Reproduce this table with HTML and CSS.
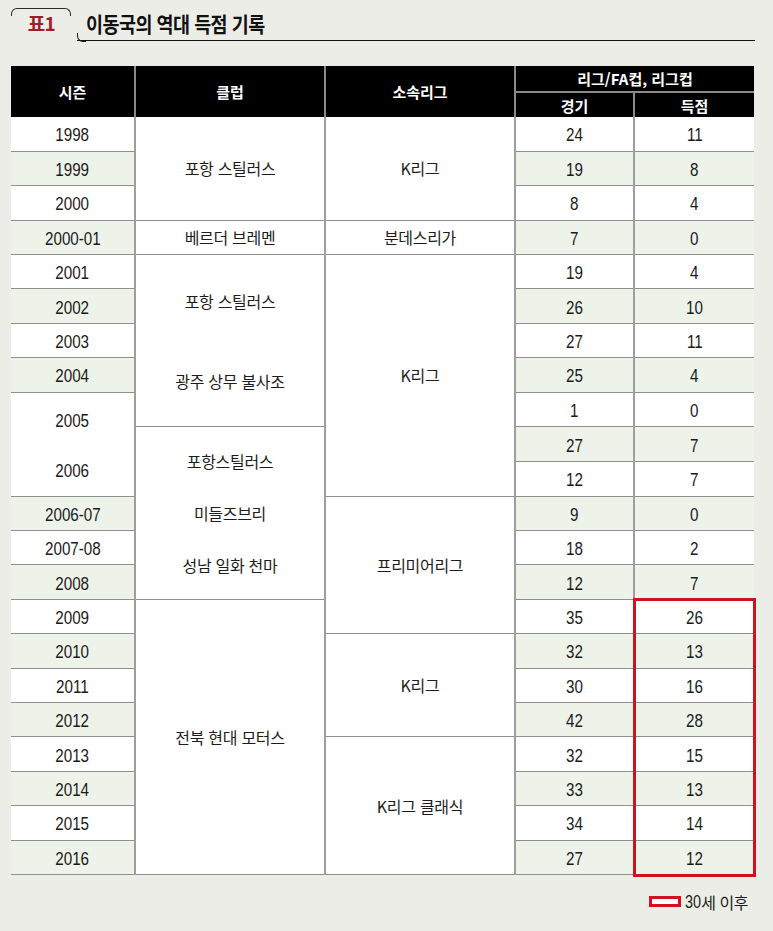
FILE: index.html
```html
<!DOCTYPE html>
<html lang="ko">
<head>
<meta charset="utf-8">
<title>이동국의 역대 득점 기록</title>
<link rel="stylesheet" href="styles.css">
</head>
<body>
<div class="page">
  <header class="title-bar">
    <div class="tab"><span class="tab-label">표1</span></div>
    <div class="title-line"><h1 class="title"><span class="title-text">이동국의 역대 득점 기록</span></h1></div>
  </header>

  <div class="table-wrap">
    <table class="record">
      <colgroup>
        <col class="c-season"><col class="c-club"><col class="c-league"><col class="c-games"><col class="c-goals">
      </colgroup>
      <thead>
        <tr class="h1">
          <th rowspan="2">시즌</th>
          <th rowspan="2">클럽</th>
          <th rowspan="2">소속리그</th>
          <th colspan="2" class="group">리그/FA컵, 리그컵</th>
        </tr>
        <tr class="h2">
          <th class="sub">경기</th>
          <th class="sub">득점</th>
        </tr>
      </thead>
      <tbody>
        <tr><td class="num"><span class="n">1998</span></td><td rowspan="3" class="ko merged">포항 스틸러스</td><td rowspan="3" class="ko merged">K리그</td><td class="num"><span class="n">24</span></td><td class="num"><span class="n">11</span></td></tr>
        <tr class="alt"><td class="num"><span class="n">1999</span></td><td class="num"><span class="n">19</span></td><td class="num"><span class="n">8</span></td></tr>
        <tr><td class="num"><span class="n">2000</span></td><td class="num"><span class="n">8</span></td><td class="num"><span class="n">4</span></td></tr>
        <tr class="alt"><td class="num"><span class="n">2000-01</span></td><td class="ko merged">베르더 브레멘</td><td class="ko merged">분데스리가</td><td class="num"><span class="n">7</span></td><td class="num"><span class="n">0</span></td></tr>
        <tr><td class="num"><span class="n">2001</span></td><td rowspan="5" class="ko merged"><div class="stack two"><span>포항 스틸러스</span><span>광주 상무 불사조</span></div></td><td rowspan="7" class="ko merged">K리그</td><td class="num"><span class="n">19</span></td><td class="num"><span class="n">4</span></td></tr>
        <tr class="alt"><td class="num"><span class="n">2002</span></td><td class="num"><span class="n">26</span></td><td class="num"><span class="n">10</span></td></tr>
        <tr><td class="num"><span class="n">2003</span></td><td class="num"><span class="n">27</span></td><td class="num"><span class="n">11</span></td></tr>
        <tr class="alt"><td class="num"><span class="n">2004</span></td><td class="num"><span class="n">25</span></td><td class="num"><span class="n">4</span></td></tr>
        <tr><td rowspan="3" class="num merged"><div class="stack seasons"><span class="n">2005</span><span class="n">2006</span></div></td><td class="num"><span class="n">1</span></td><td class="num"><span class="n">0</span></td></tr>
        <tr class="alt"><td rowspan="5" class="ko merged"><div class="stack three"><span>포항스틸러스</span><span>미들즈브리</span><span>성남 일화 천마</span></div></td><td class="num"><span class="n">27</span></td><td class="num"><span class="n">7</span></td></tr>
        <tr><td class="num"><span class="n">12</span></td><td class="num"><span class="n">7</span></td></tr>
        <tr class="alt"><td class="num"><span class="n">2006-07</span></td><td rowspan="4" class="ko merged">프리미어리그</td><td class="num"><span class="n">9</span></td><td class="num"><span class="n">0</span></td></tr>
        <tr><td class="num"><span class="n">2007-08</span></td><td class="num"><span class="n">18</span></td><td class="num"><span class="n">2</span></td></tr>
        <tr class="alt"><td class="num"><span class="n">2008</span></td><td class="num"><span class="n">12</span></td><td class="num"><span class="n">7</span></td></tr>
        <tr><td class="num"><span class="n">2009</span></td><td rowspan="8" class="ko merged">전북 현대 모터스</td><td class="num"><span class="n">35</span></td><td class="num"><span class="n">26</span></td></tr>
        <tr class="alt"><td class="num"><span class="n">2010</span></td><td rowspan="3" class="ko merged">K리그</td><td class="num"><span class="n">32</span></td><td class="num"><span class="n">13</span></td></tr>
        <tr><td class="num"><span class="n">2011</span></td><td class="num"><span class="n">30</span></td><td class="num"><span class="n">16</span></td></tr>
        <tr class="alt"><td class="num"><span class="n">2012</span></td><td class="num"><span class="n">42</span></td><td class="num"><span class="n">28</span></td></tr>
        <tr><td class="num"><span class="n">2013</span></td><td rowspan="4" class="ko merged">K리그 클래식</td><td class="num"><span class="n">32</span></td><td class="num"><span class="n">15</span></td></tr>
        <tr class="alt"><td class="num"><span class="n">2014</span></td><td class="num"><span class="n">33</span></td><td class="num"><span class="n">13</span></td></tr>
        <tr><td class="num"><span class="n">2015</span></td><td class="num"><span class="n">34</span></td><td class="num"><span class="n">14</span></td></tr>
        <tr class="alt"><td class="num"><span class="n">2016</span></td><td class="num"><span class="n">27</span></td><td class="num"><span class="n">12</span></td></tr>
      </tbody>
    </table>
    <div class="highlight" aria-hidden="true"></div>
  </div>

  <div class="legend">
    <span class="legend-swatch"></span>
    <span class="legend-text"><span class="legend-num">30</span>세 이후</span>
  </div>
</div>
</body>
</html>
```

FILE: styles.css
```css
* { box-sizing: border-box; }

html, body {
  margin: 0;
  padding: 0;
  background: #ededE8;
}

body {
  width: 773px;
  height: 931px;
  overflow: hidden;
  font-family: "Noto Sans CJK KR", "Noto Sans", sans-serif;
  color: #1c1c1c;
}

.page {
  padding-top: 8px;
}

/* ---------- title bar ---------- */
.title-bar {
  display: flex;
  margin: 0 18px 0 11px;
  height: 33px;
}

.tab {
  position: relative;
  width: 60px;
  display: flex;
  justify-content: center;
  padding-top: 3px;
}

.tab::before {
  content: "";
  position: absolute;
  left: 0;
  right: 0;
  top: 0;
  height: 7px;
  border: 1.5px solid #2a2a2a;
  border-bottom: none;
  border-radius: 6px 6px 0 0;
}

.tab-label {
  font-size: 19px;
  font-weight: 700;
  color: #a11d2b;
  line-height: 24px;
  letter-spacing: -0.5px;
  padding-left: 1px;
}

.title-line {
  position: relative;
  flex: 1;
  margin-left: 6px;
  border-bottom: 1.5px solid #151515;
}

.title-line::before {
  content: "";
  position: absolute;
  left: 0;
  bottom: -1.5px;
  width: 8px;
  height: 8px;
  border-left: 1.5px solid #151515;
  border-bottom: 1.5px solid #151515;
  border-radius: 0 0 0 6px;
}

.title {
  margin: 0;
  padding: 2px 0 0 9px;
  font-size: 21px;
  font-weight: 700;
  line-height: 26px;
  color: #111;
}

.title-text {
  display: inline-block;
  transform: scaleX(0.88);
  transform-origin: left center;
  letter-spacing: -0.6px;
}

/* ---------- table ---------- */
.table-wrap {
  position: relative;
  margin: 25px 0 0 11px;
  width: 743px;
}

.record {
  border-collapse: collapse;
  table-layout: fixed;
  width: 743px;
  border-bottom: 1.5px solid #222;
}

.c-season { width: 124px; }
.c-club { width: 190px; }
.c-league { width: 190px; }
.c-games { width: 119px; }
.c-goals { width: 120px; }

.record th {
  background: #000;
  color: #fff;
  font-weight: 700;
  font-size: 15px;
  padding: 0;
  text-align: center;
  vertical-align: middle;
  border-left: 2px solid #8a8a8a;
  border-right: 2px solid #8a8a8a;
}

.record th:first-child { border-left: none; }
.record .h1 th:last-child,
.record .h2 th:last-child { border-right: none; }

.record .h1 { height: 26px; }
.record .h2 { height: 25px; }

.record th.group {
  border-bottom: 2px solid #8a8a8a;
  line-height: 20px;
}

.record th.sub {
  line-height: 20px;
  padding-top: 1px;
}

.record tbody tr { height: 34.4px; }

.record td {
  padding: 0;
  text-align: center;
  vertical-align: middle;
  background: #fff;
  border-top: 1px solid #8e8e8e;
  border-bottom: 1px solid #8e8e8e;
  border-left: 2px solid #9e9e9e;
  border-right: 2px solid #9e9e9e;
}

.record tbody tr:first-child td { border-top: none; }

.record tr.alt td { background: #eef3ea; }
.record tr.alt td.merged { background: #fff; }

.record tr td:first-child { border-left: none; }
.record tr td:last-child { border-right: none; }

.record td.num {
  font-family: "Liberation Sans Narrow", "Arial Narrow", "Liberation Sans", sans-serif;
  font-size: 19px;
  color: #1a1a1a;
  line-height: 22px;
  padding-top: 3px;
}

.n {
  display: inline-block;
  transform: scaleX(0.8);
  transform-origin: center center;
}

.ko {
  font-family: "Noto Sans CJK KR", "Noto Sans", sans-serif;
  font-size: 16px;
  color: #1c1c1c;
  line-height: 22px;
  letter-spacing: -0.3px;
}

.stack {
  display: flex;
  flex-direction: column;
  align-items: center;
}

.stack.two span { line-height: 80px; }
.stack.three span { line-height: 52px; }
.stack.seasons span { line-height: 50px; }

.highlight {
  position: absolute;
  left: 622px;
  top: 532px;
  width: 123px;
  height: 279px;
  border: 3.5px solid #d0111e;
  pointer-events: none;
}

/* ---------- legend ---------- */
.legend {
  display: flex;
  justify-content: flex-end;
  align-items: center;
  gap: 4px;
  margin: 17px 25px 0 0;
}

.legend-swatch {
  width: 32px;
  height: 11px;
  border: 3px solid #d0111e;
  background: #fff;
}

.legend-text {
  display: flex;
  align-items: center;
  font-size: 16px;
  color: #1c1c1c;
  line-height: 20px;
  letter-spacing: -0.5px;
}

.legend-num {
  display: inline-block;
  font-family: "Liberation Sans Narrow", "Arial Narrow", "Liberation Sans", sans-serif;
  font-size: 18px;
  letter-spacing: 0;
  transform: scaleX(0.8);
  margin: 0 -2px 0 -2px;
}
```
